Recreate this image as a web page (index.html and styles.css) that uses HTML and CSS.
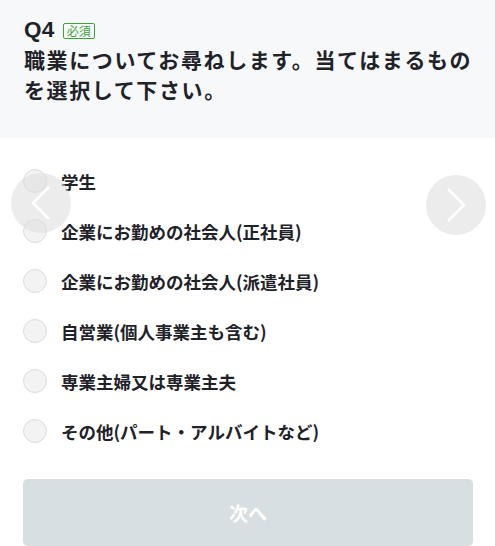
FILE: index.html
```html
<!DOCTYPE html>
<html lang="ja">

<head>
    <meta charset="UTF-8">
    <meta name="viewport" content="width=device-width, initial-scale=1.0">
    <title>Q4</title>
    <link rel="stylesheet" href="styles.css">
</head>

<body>
    <div class="question">
        <div class="question-head">
            <span class="question-num">Q4</span>
            <span class="required">必須</span>
        </div>
        <h2 class="question-title">職業についてお尋ねします。当てはまるものを選択して下さい。</h2>
    </div>

    <form class="answers">
        <label class="choice"><input type="radio" name="job"><span>学生</span></label>
        <label class="choice"><input type="radio" name="job"><span>企業にお勤めの社会人(正社員)</span></label>
        <label class="choice"><input type="radio" name="job"><span>企業にお勤めの社会人(派遣社員)</span></label>
        <label class="choice"><input type="radio" name="job"><span>自営業(個人事業主も含む)</span></label>
        <label class="choice"><input type="radio" name="job"><span>専業主婦又は専業主夫</span></label>
        <label class="choice"><input type="radio" name="job"><span>その他(パート・アルバイトなど)</span></label>

        <button type="button" class="next" disabled>次へ</button>
    </form>

    <!-- slider arrows sit over the list -->
    <div class="arrow arrow-prev">
        <svg width="22" height="36" viewBox="0 0 22 36"><path d="M19 2 L3 18 L19 34" fill="none" stroke="#fff" stroke-width="2.5"/></svg>
    </div>
    <div class="arrow arrow-next">
        <svg width="22" height="36" viewBox="0 0 22 36"><path d="M3 2 L19 18 L3 34" fill="none" stroke="#fff" stroke-width="2.5"/></svg>
    </div>
</body>

</html>
```

FILE: styles.css
```css
* {
    box-sizing: border-box;
    padding: 0;
    margin: 0;
}

body {
    font-family: "Noto Sans CJK JP", "Noto Sans", sans-serif;
    color: #1f2329;
    background-color: #fff;
    position: relative;
    width: 495px;
    height: 546px;
    overflow: hidden;
}

.question {
    background-color: #f7f8fa;
    padding: 16px 12px 0 24px;
    height: 138px;
}

.question-head {
    display: flex;
    align-items: center;
    height: 28px;
}

.question-num {
    font-family: "Liberation Sans", Arial, sans-serif;
    font-weight: bold;
    font-size: 22.5px;
    letter-spacing: 0.3px;
    margin-right: 8px;
}

.required {
    display: inline-block;
    border: 1px solid #3ba53b;
    color: #3ba53b;
    font-size: 12px;
    line-height: 14px;
    padding: 0 3px;
    border-radius: 2px;
    margin-top: 1px;
}

.question-title {
    font-size: 21px;
    font-weight: bold;
    line-height: 30px;
    letter-spacing: 1.6px;
    margin-top: 0;
}

.answers {
    padding: 18px 22px 0 23px;
}

.choice {
    display: flex;
    align-items: center;
    height: 50px;
    cursor: pointer;
}

.choice input {
    appearance: none;
    -webkit-appearance: none;
    width: 24px;
    height: 24px;
    border-radius: 50%;
    border: 1px solid #dcdcdc;
    background-color: #f3f3f3;
    margin-right: 14px;
    flex-shrink: 0;
}

.choice span {
    font-size: 17.5px;
    font-weight: bold;
}

.next {
    display: block;
    width: 450px;
    height: 67px;
    margin-top: 23px;
    border: 0;
    border-radius: 5px;
    background-color: #d8dfe2;
    color: #fff;
    font-family: "Noto Sans CJK JP", sans-serif;
    font-size: 19px;
    font-weight: bold;
}

.arrow {
    position: absolute;
    width: 60px;
    height: 60px;
    border-radius: 50%;
    background-color: rgba(220, 220, 220, 0.55);
    display: flex;
    align-items: center;
    justify-content: center;
}

.arrow-prev {
    left: 11px;
    top: 173px;
}

.arrow-next {
    left: 426px;
    top: 175px;
}
```
